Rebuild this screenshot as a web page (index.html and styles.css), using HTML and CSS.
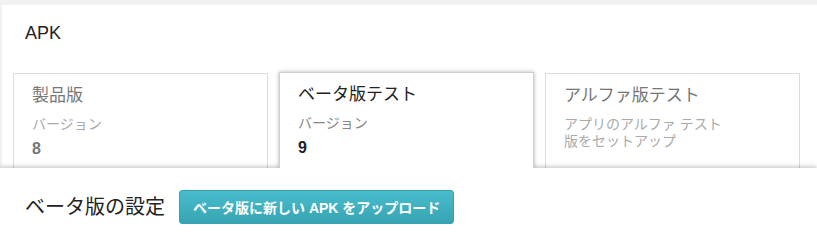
FILE: index.html
```html
<!DOCTYPE html>
<html lang="ja">
<head>
    <meta charset="UTF-8">
    <meta name="viewport" content="width=device-width, initial-scale=1.0">
    <title>APK</title>
    <link rel="stylesheet" href="styles.css">
</head>
<body>
    <div class="apk-card">
        <h2 class="apk-title">APK</h2>

        <div class="tracks">
            <div class="track">
                <div class="track-name">製品版</div>
                <div class="track-label">バージョン</div>
                <div class="track-version">8</div>
            </div>
            <div class="track track-active">
                <div class="track-name">ベータ版テスト</div>
                <div class="track-label">バージョン</div>
                <div class="track-version">9</div>
            </div>
            <div class="track">
                <div class="track-name">アルファ版テスト</div>
                <div class="track-label">アプリのアルファ テスト<br>版をセットアップ</div>
            </div>
        </div>
    </div>

    <div class="track-panel">
        <h3 class="panel-title">ベータ版の設定</h3>
        <button class="upload-btn">ベータ版に新しい APK をアップロード</button>
    </div>
</body>
</html>
```

FILE: styles.css
```css
* {
    box-sizing: border-box;
}

body {
    margin: 0;
    background-color: #f1f1f1;
    font-family: "Liberation Sans", "Noto Sans CJK JP", sans-serif;
    color: #222;
}

.apk-card {
    margin: 5px 0 0 2px;
    padding: 16px 0 0 11px;
    background-color: #fff;
}

.apk-title {
    margin: 0 0 28px 12px;
    font-size: 18px;
    line-height: 24px;
    font-weight: normal;
}

.tracks {
    display: flex;
    gap: 11px;
}

.track {
    width: 255px;
    height: 95px;
    padding: 10px 18px;
    border: 1px solid #dcdcdc;
    border-bottom: none;
    background-color: #fff;
}

.track-active {
    position: relative;
    z-index: 2;
    height: 96px;
    margin-top: -1px;
    border-color: #cfcfcf;
    box-shadow: 0 0 4px rgba(0, 0, 0, 0.3);
    clip-path: inset(-8px -8px 0 -8px);
}

.track-name {
    margin-bottom: 8px;
    font-size: 17px;
    line-height: 24px;
    color: #777;
}

.track-label {
    font-size: 14px;
    line-height: 17px;
    color: #aaa;
}

.track-version {
    margin-top: 6px;
    font-size: 16px;
    line-height: 20px;
    font-weight: bold;
    color: #777;
}

.track-active .track-name {
    color: #222;
}

.track-active .track-label {
    color: #888;
}

.track-active .track-version {
    color: #222;
}

.track-panel {
    position: relative;
    z-index: 1;
    display: flex;
    align-items: flex-start;
    gap: 14px;
    height: 74px;
    padding: 22px 25px 0;
    background-color: #fff;
    box-shadow: 0 -1px 5px rgba(0, 0, 0, 0.26);
}

.panel-title {
    margin: 0;
    font-size: 20px;
    line-height: 34px;
    font-weight: normal;
    color: #222;
}

.upload-btn {
    height: 34px;
    padding: 0 13px;
    border: 1px solid #37a3b1;
    border-radius: 3px;
    background: linear-gradient(#47bdcc, #38a4b2);
    color: #fff;
    font-family: inherit;
    font-size: 14px;
    font-weight: bold;
    cursor: pointer;
}
```
